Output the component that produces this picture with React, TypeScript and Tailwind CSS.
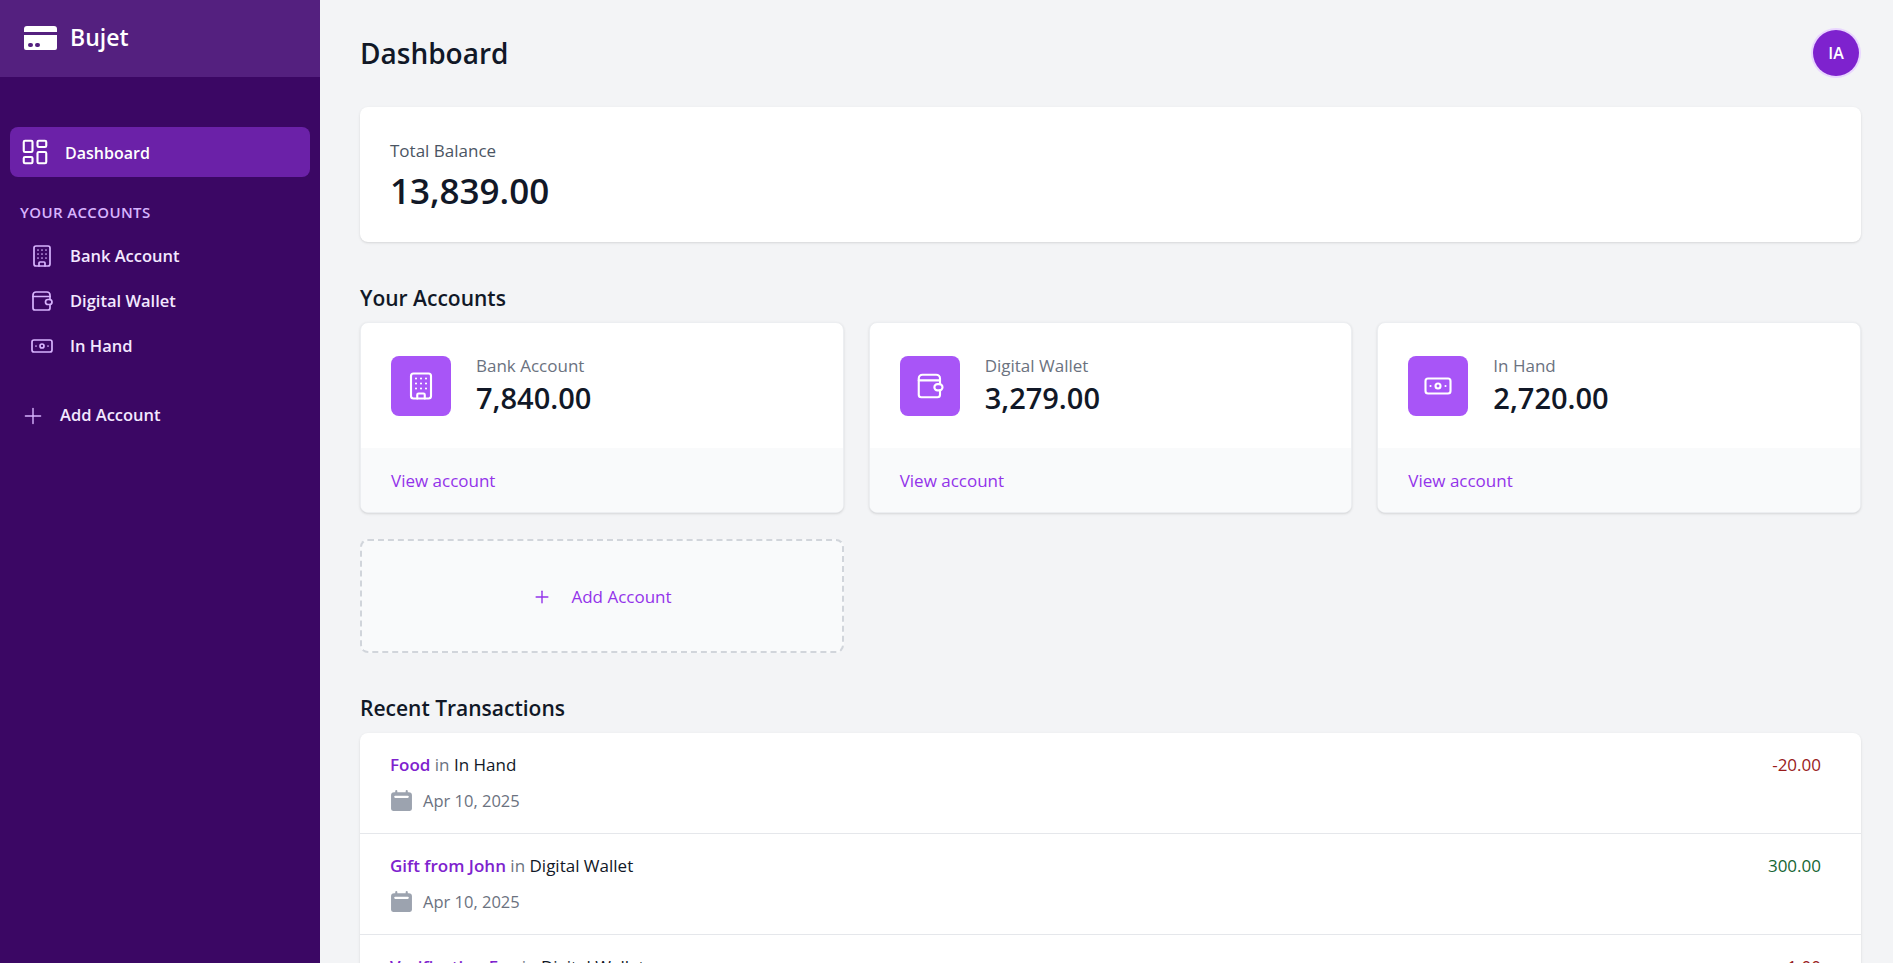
import { Building, Banknote, LayoutDashboard, Plus } from "lucide-react";

const font = "font-['Open_Sans',sans-serif]";

const accounts = [
  { name: "Bank Account", amount: "7,840.00", icon: "bank" },
  { name: "Digital Wallet", amount: "3,279.00", icon: "wallet" },
  { name: "In Hand", amount: "2,720.00", icon: "cash" },
];

const transactions = [
  { title: "Food", account: "In Hand", date: "Apr 10, 2025", amount: "-20.00", color: "text-[#991b1b]" },
  { title: "Gift from John", account: "Digital Wallet", date: "Apr 10, 2025", amount: "300.00", color: "text-[#166534]" },
  { title: "Verification Fee", account: "Digital Wallet", date: "Apr 10, 2025", amount: "-1.00", color: "text-[#991b1b]" },
];

function WalletIcon({ className }: { className?: string }) {
  return (
    <svg className={className} viewBox="0 0 24 24" fill="none" stroke="currentColor" strokeWidth="1.7" strokeLinejoin="round" strokeLinecap="round">
      <path d="M20 10.500V6a3 3 0 0 0-3-3H6a3 3 0 0 0-3 3v13a2 2 0 0 0 2 2h13a2 2 0 0 0 2-2v-3.500" />
      <path d="M3 7.500h17" />
      <rect x="15.500" y="10.500" width="6.500" height="5" rx="2.500" />
    </svg>
  );
}

function AccountIcon({ icon, className }: { icon: string; className?: string }) {
  if (icon === "bank") return <Building className={className} strokeWidth={1.7} />;
  if (icon === "wallet") return <WalletIcon className={className} />;
  return <Banknote className={className} strokeWidth={1.7} />;
}

function CalendarIcon() {
  return (
    <svg className="w-[23px] h-[23px] text-[#9ca3af] shrink-0" viewBox="0 0 22 22" fill="currentColor">
      <rect x="5" y="1" width="2" height="4" rx="1" />
      <rect x="15" y="1" width="2" height="4" rx="1" />
      <path fillRule="evenodd" d="M4 3h14a3 3 0 0 1 3 3v13a2 2 0 0 1-2 2H3a2 2 0 0 1-2-2V6a3 3 0 0 1 3-3Zm1 3.500a1 1 0 0 0 0 2h12a1 1 0 0 0 0-2H5Z" />
    </svg>
  );
}

export default function App() {
  return (
    <div className={`${font} flex h-screen overflow-hidden bg-[#f3f4f6] text-[#111827]`}>
      {/* sidebar */}
      <aside className="w-[320px] shrink-0 bg-[#3b0764]">
        <div className="h-[77px] bg-[#54207f] flex items-center gap-[13px] pl-6 pb-[2px]">
          <svg className="w-[33px] h-[26px] text-white" viewBox="0 0 33 26" fill="currentColor">
            <path d="M3 1h27a3 3 0 0 1 3 3v3H0V4a3 3 0 0 1 3-3Z" />
            <path fillRule="evenodd" d="M0 10h33v13a2 2 0 0 1-2 2H2a2 2 0 0 1-2-2V10Zm6 8a2 2 0 0 0 0 4h1a2 2 0 0 0 0-4H6Zm7 0a2 2 0 0 0 0 4h1a2 2 0 0 0 0-4h-1Z" />
          </svg>
          <span className="text-[23px] font-semibold text-white">Bujet</span>
        </div>

        <nav className="px-[10px] pt-[50px]">
          <div className="h-[50px] rounded-lg bg-[#6b21a8] flex items-center gap-[15px] pl-[10px] text-white">
            <LayoutDashboard className="w-[30px] h-[30px]" strokeWidth={1.7} />
            <span className="text-base font-semibold pt-px">Dashboard</span>
          </div>
          <div className="mt-[24px] pl-[10px] text-[15px] font-semibold tracking-wide text-[#d8b4fe]">YOUR ACCOUNTS</div>
          <ul className="mt-[10px]">
            {accounts.map((a) => (
              <li key={a.name} className="h-[45px] flex items-center pl-[20px] gap-[16px] text-[#f3e8ff]">
                <AccountIcon icon={a.icon} className="w-6 h-6 text-[#d8b4fe]" />
                <span className="text-[16.5px] font-semibold">{a.name}</span>
              </li>
            ))}
          </ul>
          <div className="mt-[23px] h-[48px] flex items-center pl-[10px] gap-[14px] text-[#f3e8ff]">
            <Plus className="w-[26px] h-[26px] text-[#d8b4fe]" strokeWidth={1.3} />
            <span className="text-[16.5px] font-semibold">Add Account</span>
          </div>
        </nav>
      </aside>

      {/* main */}
      <main className="flex-1 min-w-0 pl-10 pr-8">
        <header className="h-[107px] flex items-center justify-between pb-[2px]">
          <h1 className="text-[28px] font-semibold">Dashboard</h1>
          <div className="w-[46px] h-[46px] mr-[2px] rounded-full bg-[#7e22ce] ring-2 ring-[#e9d5ff] flex items-center justify-center text-white font-semibold text-base">IA</div>
        </header>

        <section className="h-[135px] bg-white rounded-lg shadow-sm pl-[30px] pt-[31px]">
          <p className="text-[17px] text-[#4b5563]">Total Balance</p>
          <p className="text-[35px] leading-[54px] font-[550]">13,839.00</p>
        </section>

        <h2 className="mt-[40px] text-[21px] leading-8 font-semibold">Your Accounts</h2>
        <div className="mt-[8px] grid grid-cols-3 gap-[25px]">
          {accounts.map((a) => (
            <div key={a.name} className="bg-white rounded-lg shadow-sm border border-[#eceef1] overflow-hidden">
              <div className="h-[125px] flex items-center px-[30px] gap-[25px]">
                <div className="w-[60px] h-[60px] rounded-lg bg-[#a855f7] flex items-center justify-center text-white">
                  <AccountIcon icon={a.icon} className="w-[30px] h-[30px]" />
                </div>
                <div>
                  <p className="text-[17px] leading-6 text-[#6b7280]">{a.name}</p>
                  <p className="text-[29px] leading-[39px] font-[550]">{a.amount}</p>
                </div>
              </div>
              <div className="h-[64px] bg-[#f9fafb] flex items-center px-[30px] pt-[2px] text-[17px] font-medium text-[#9333ea]">View account</div>
            </div>
          ))}
        </div>

        <div className="mt-[26px] w-[484px] h-[114px] pt-[2px] rounded-lg border-2 border-dashed border-[#d1d5db] bg-[#f9fafb] flex items-center justify-center gap-[19px] text-[#9333ea]">
          <Plus className="w-5 h-5" strokeWidth={1.7} />
          <span className="text-[17px] font-medium">Add Account</span>
        </div>

        <h2 className="mt-[39px] text-[21px] leading-8 font-semibold">Recent Transactions</h2>
        <div className="mt-[9px] bg-white rounded-lg shadow-sm overflow-hidden">
          {transactions.map((t) => (
            <div key={t.title} className="h-[101px] border-b border-[#e5e7eb] flex justify-between pl-[30px] pr-[40px] pt-[19px]">
              <div>
                <p className="text-[17px]">
                  <span className="font-[550] text-[#7e22ce]">{t.title}</span>
                  <span className="text-[#6b7280]"> in </span>
                  <span>{t.account}</span>
                </p>
                <p className="mt-[11px] flex items-center gap-[10px] text-[16.5px] text-[#6b7280]">
                  <CalendarIcon />
                  {t.date}
                </p>
              </div>
              <p className={`text-[17px] font-medium ${t.color}`}>{t.amount}</p>
            </div>
          ))}
        </div>
      </main>
    </div>
  );
}
